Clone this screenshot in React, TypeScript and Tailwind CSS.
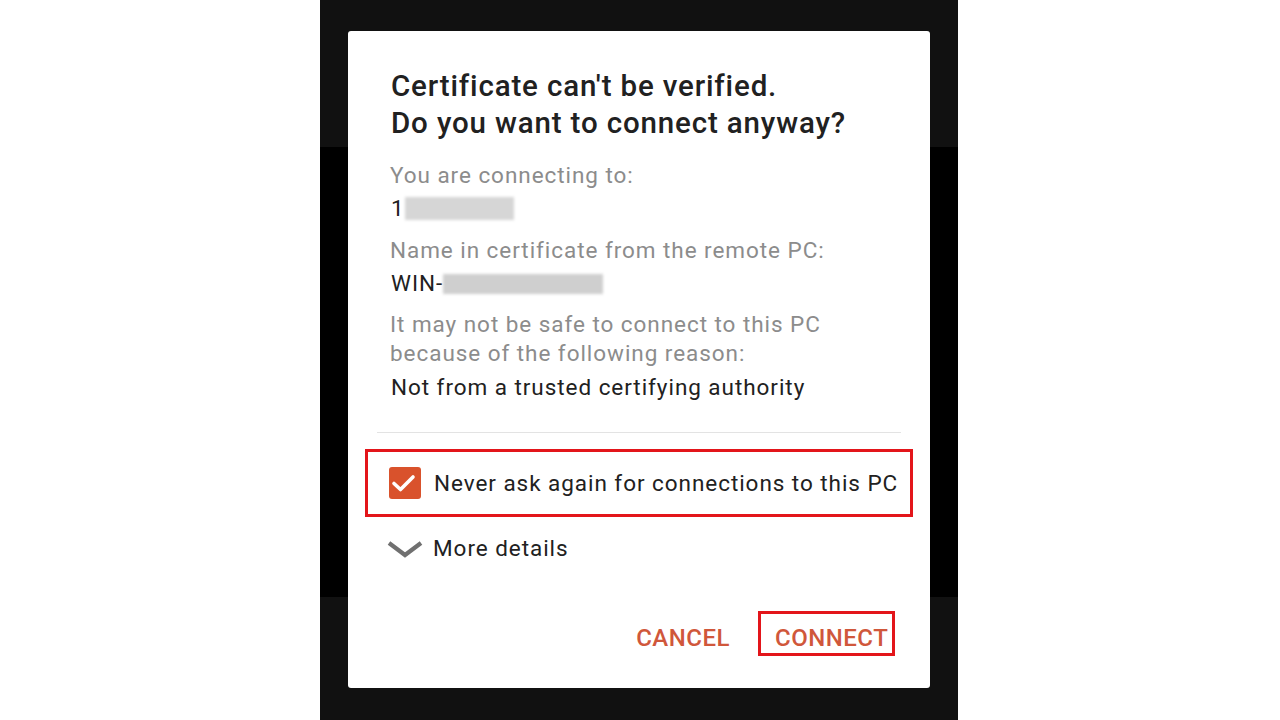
import React from "react";

export default function App() {
  const font = { fontFamily: "Roboto, 'Noto Sans', sans-serif" };
  return (
    <div className="w-[1280px] h-[720px] bg-white flex overflow-hidden" style={font}>
      <div className="ml-[320px] w-[638px] h-[720px] relative flex flex-col">
        <div className="h-[147px] bg-[#111111]" />
        <div className="h-[450px] bg-black" />
        <div className="flex-1 bg-[#111111]" />

        <div className="absolute left-[28px] top-[31px] w-[582px] h-[657px] bg-white rounded-[3px] flex flex-col">
          <div className="pt-[37px] pl-[43px] text-[29.5px] leading-[37px] font-medium text-[#212121] tracking-[0.85px]">
            <div>Certificate can't be verified.</div>
            <div>Do you want to connect anyway?</div>
          </div>

          <div className="pl-[42px] text-[22.5px] leading-[29px] tracking-[0.95px]">
            <div className="mt-[19px] text-[#8c8c8c]">You are connecting to:</div>
            <div className="mt-[4px] text-[#212121] pl-[1px] flex items-center">
              <span>1</span>
              <span className="inline-block w-[109px] h-[23px] bg-[#d6d6d6] blur-[1.5px]" />
            </div>
            <div className="mt-[13px] text-[#8c8c8c]">Name in certificate from the remote PC:</div>
            <div className="mt-[4px] text-[#212121] pl-[1px] flex items-center">
              <span>WIN-</span>
              <span className="inline-block w-[160px] h-[20px] bg-[#cfcfcf] blur-[1.5px]" />
            </div>
            <div className="mt-[12px] text-[#8c8c8c]">
              <div>It may not be safe to connect to this PC</div>
              <div>because of the following reason:</div>
            </div>
            <div className="mt-[5px] text-[#212121] pl-[1px]">Not from a trusted certifying authority</div>
          </div>

          <div className="mt-[30px] mx-[29px] h-[1px] bg-[#e3e3e3]" />

          <div className="mt-[16px] mx-[17px] h-[68px] border-[3px] border-[#e3151a] flex items-center pl-[21px]">
            <div className="w-[32px] h-[32px] rounded-[3px] bg-[#d9522c] flex items-center justify-center">
              <svg width="32" height="32" viewBox="0 0 32 32">
                <path d="M5 16.5 L11.5 22.5 L24 10" fill="none" stroke="white" strokeWidth="3.6" strokeLinecap="round" strokeLinejoin="round" />
              </svg>
            </div>
            <span className="ml-[13px] text-[22.5px] leading-[29px] tracking-[0.95px] text-[#212121]">Never ask again for connections to this PC</span>
          </div>

          <div className="mt-[17px] pl-[39px] flex items-center h-[29px]">
            <svg width="36" height="18" viewBox="0 0 36 18">
              <path d="M2 3 L18 15 L34 3" fill="none" stroke="#707070" strokeWidth="4.2" />
            </svg>
            <span className="ml-[10px] text-[22.5px] leading-[29px] tracking-[0.95px] text-[#212121]">More details</span>
          </div>

          <div className="mt-[48px] flex justify-end items-start pr-[35px]">
            <span className="mt-[13px] text-[24px] font-medium text-[#d0573b] leading-[29px] tracking-[0.5px]">CANCEL</span>
            <div className="ml-[28px] w-[137px] h-[45px] border-[3px] border-[#e3151a] pt-[10px] pl-[14px]">
              <div className="text-[24px] font-medium text-[#d0573b] leading-[29px] tracking-[0.5px]">CONNECT</div>
            </div>
          </div>
        </div>
      </div>
    </div>
  );
}
